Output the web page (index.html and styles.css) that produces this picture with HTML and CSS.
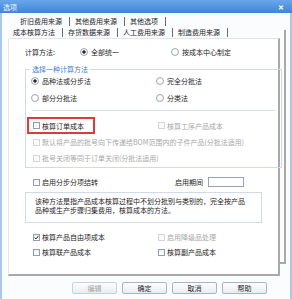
FILE: index.html
```html
<!DOCTYPE html>
<html>
<head>
    <link rel="stylesheet" href="styles.css">
</head>
<body>
<div class="window">
    <div class="titlebar">
        <span class="title">选项</span>
        <span class="close">✕</span>
    </div>

    <div class="client">
        <div class="tabs">
            <div class="tab-row first">
                <span>折旧费用来源</span><span class="sep"></span>
                <span>其他费用来源</span><span class="sep"></span>
                <span>其他选项</span><span class="sep"></span>
            </div>
            <div class="tab-row second">
                <span>成本核算方法</span><span class="sep"></span>
                <span>存货数据来源</span><span class="sep"></span>
                <span>人工费用来源</span><span class="sep"></span>
                <span>制造费用来源</span><span class="sep"></span>
            </div>
        </div>

        <div class="page">
            <div class="row method-row">
                <span class="method-label">计算方法:</span>
                <span class="opt radio checked method-first"><span class="dot"></span>全部统一</span>
                <span class="opt radio"><span class="dot"></span>按成本中心制定</span>
            </div>

            <fieldset class="group">
                <legend>选择一种计算方法</legend>
                <div class="row first-row">
                    <div class="col"><span class="opt radio checked"><span class="dot"></span>品种法或分步法</span></div>
                    <div class="col"><span class="opt radio"><span class="dot"></span>完全分批法</span></div>
                </div>
                <div class="row gap5">
                    <div class="col"><span class="opt radio"><span class="dot"></span>部分分批法</span></div>
                    <div class="col"><span class="opt radio"><span class="dot"></span>分类法</span></div>
                </div>
                <div class="divider"></div>
                <div class="row order-row">
                    <div class="col">
                        <span class="highlight"><span class="opt check"><span class="box"></span>核算订单成本</span></span>
                    </div>
                    <div class="col"><span class="opt check disabled"><span class="box"></span>核算工序产品成本</span></div>
                </div>
                <div class="row gap2">
                    <span class="opt check disabled"><span class="box"></span>默认将产品的批号向下传递给BOM范围内的子件产品(分批法适用)</span>
                </div>
                <div class="row gap4">
                    <span class="opt check disabled"><span class="box"></span>批号关闭等同于订单关闭(分批法适用)</span>
                </div>
            </fieldset>

            <div class="row step-row">
                <span class="opt check step-opt"><span class="box"></span>启用分步分项结转</span>
                <span class="period-label">启用期间</span>
                <span class="period-input"></span>
            </div>

            <div class="desc">
                <div>该种方法是指产品成本核算过程中不划分批别与类别的，完全按产品</div>
                <div>品种或生产步骤归集费用，核算成本的方法。</div>
            </div>

            <div class="row plain gap8">
                <div class="col">
                    <span class="opt check checked"><span class="box"><svg width="5" height="5" viewBox="0 0 5 5"><polyline points="0.5,2.5 2,4 4.5,0.8" fill="none" stroke="#333" stroke-width="1"/></svg></span>核算产品自由项成本</span>
                </div>
                <div class="col"><span class="opt check disabled"><span class="box"></span>启用降级品处理</span></div>
            </div>
            <div class="row plain gap3">
                <div class="col"><span class="opt check"><span class="box"></span>核算联产品成本</span></div>
                <div class="col"><span class="opt check"><span class="box"></span>核算副产品成本</span></div>
            </div>
        </div>

        <div class="buttons">
            <span class="btn disabled">编辑</span>
            <span class="btn">确定</span>
            <span class="btn">取消</span>
            <span class="btn">帮助</span>
        </div>
    </div>
</div>
</body>
</html>
```

FILE: styles.css
```css
body {
    margin: 0;
    font-family: "Noto Sans CJK SC", "Noto Sans", sans-serif;
    font-size: 7px;
    color: #1e1e1e;
}

.window {
    width: 292px;
    height: 299px;
    overflow: hidden;
}

.titlebar {
    height: 13px;
    background: linear-gradient(#6aa6ea, #4085d8);
    display: flex;
    align-items: center;
    justify-content: space-between;
    padding: 0 8px 0 3px;
    color: #f4f8ff;
}

.close {
    font-size: 7px;
    font-weight: bold;
    color: #fff;
}

.client {
    position: relative;
    z-index: 0;
    height: 286px;
    border-left: 2px solid #a9c8ef;
    border-right: 2px solid #a9c8ef;
    background: #fbfcfe;
}

.tabs {
    padding-top: 3px;
}

.tab-row {
    display: flex;
    align-items: center;
    height: 11px;
    line-height: 11px;
}

.tab-row.first {
    padding-left: 18px;
}

.tab-row.second {
    padding-left: 11px;
}

.sep {
    width: 1px;
    height: 9px;
    background: #6b6b6b;
    margin: 0 5px 0 7px;
}

.page {
    position: relative;
    margin-left: 6px;
    width: 272px;
    height: 238px;
    box-sizing: border-box;
    border: 1px solid #e2e7ee;
    border-right: 2px solid #a9a9a9;
    border-bottom: 2px solid #a9a9a9;
    background: #fff;
    padding-left: 16px;
}

/* the tab page stacked behind */
.page::before {
    content: "";
    position: absolute;
    top: -9px;
    right: -8px;
    bottom: 10px;
    left: 0;
    border-right: 2px solid #a9a9a9;
    border-bottom: 2px solid #a9a9a9;
    z-index: -1;
}

.row {
    display: flex;
    align-items: center;
    height: 12px;
}

.col {
    width: 125px;
    flex: none;
    display: flex;
    align-items: center;
}

.opt {
    display: flex;
    align-items: center;
    white-space: nowrap;
}

.opt.disabled {
    color: #a8a8a8;
}

.radio .dot {
    flex: none;
    width: 8px;
    height: 8px;
    box-sizing: border-box;
    border: 1px solid #9ea9ba;
    border-radius: 50%;
    background: radial-gradient(circle, #fff 40%, #e3e7ed);
    margin-right: 3px;
}

.radio.checked .dot {
    background: radial-gradient(circle, #2a2a2a 0 1.4px, #fff 1.9px, #e3e7ed);
}

.check .box {
    flex: none;
    width: 7px;
    height: 7px;
    box-sizing: border-box;
    border: 1px solid #919db0;
    background: linear-gradient(#eef0f3, #fff);
    margin: 0 2px;
    display: flex;
    align-items: center;
    justify-content: center;
}

.check.disabled .box {
    border-color: #d3d7dd;
    background: #fafafa;
}

.method-row {
    margin-top: 7px;
}

.method-label {
    width: 55px;
}

.method-first {
    width: 91px;
}

.group {
    margin: 7px 0 0;
    padding: 0 0 3px;
    width: 237px;
    box-sizing: border-box;
    border: 1px solid #cfdbea;
}

.group legend {
    padding: 0 2px;
    margin-left: 4px;
    line-height: 9px;
    color: #3d7bd6;
}

.group .row {
    padding-left: 5px;
}

.first-row {
    margin-top: 1px;
}

.gap2 {
    margin-top: 2px;
}

.gap3 {
    margin-top: 3px;
}

.gap4 {
    margin-top: 4px;
}

.gap5 {
    margin-top: 5px;
}

.gap8 {
    margin-top: 8px;
}

.divider {
    height: 1px;
    margin: 6px 6px 0;
    background: #d5deea;
}

.order-row {
    margin-top: 6px;
    height: 17px;
}

.highlight {
    display: flex;
    align-items: center;
    height: 17px;
    width: 68px;
    box-sizing: border-box;
    border: 2px solid #e0393b;
    margin-left: -4px;
    padding-left: 2px;
}

.step-row {
    margin-top: 8px;
    padding-left: 6px;
}

.step-opt {
    width: 144px;
}

.period-label {
    margin-right: 5px;
}

.period-input {
    width: 36px;
    height: 10px;
    box-sizing: border-box;
    border: 1px solid #9aa3b0;
    background: #fff;
}

.desc {
    margin-top: 4px;
    width: 237px;
    height: 31px;
    box-sizing: border-box;
    border: 1px solid #cfdbea;
    padding: 4px 0 0 9px;
    line-height: 9px;
    white-space: nowrap;
}

.plain {
    padding-left: 6px;
}

.buttons {
    display: flex;
    gap: 5px;
    padding-left: 70px;
    margin-top: 6px;
}

.btn {
    width: 45px;
    height: 12px;
    box-sizing: border-box;
    border: 1px solid #a9b5c6;
    border-radius: 2px;
    background: linear-gradient(#fdfdfe, #e8edf3);
    display: flex;
    align-items: center;
    justify-content: center;
}

.btn.disabled {
    color: #a3a3a3;
    border-color: #c8d0da;
}
```
